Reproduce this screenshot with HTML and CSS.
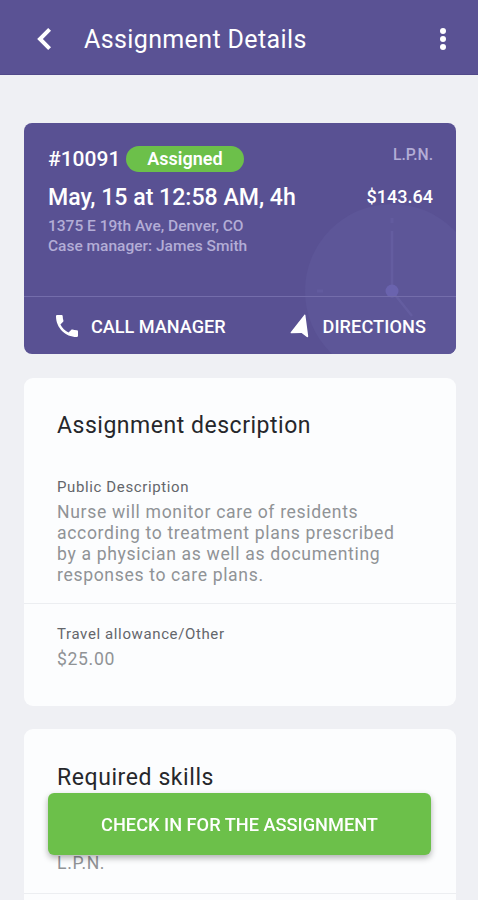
FILE: index.html
```html
<!DOCTYPE html>
<html lang="en">
<head>
  <meta charset="UTF-8" />
  <meta name="viewport" content="width=device-width, initial-scale=1.0" />
  <title>Assignment Details</title>
  <link rel="stylesheet" href="styles.css">
</head>
<body>
  <header class="topbar">
    <button class="icon-button" aria-label="Back">
      <svg width="16" height="26" viewBox="0 0 16 26"><path d="M13.6 3.4 4 13l9.6 9.6" fill="none" stroke="#fff" stroke-width="4"/></svg>
    </button>
    <h1>Assignment Details</h1>
    <button class="icon-button" aria-label="More">
      <svg width="8" height="24" viewBox="0 0 8 24" fill="#fff"><circle cx="4" cy="4" r="3"/><circle cx="4" cy="12" r="3"/><circle cx="4" cy="20" r="3"/></svg>
    </button>
  </header>

  <main>
    <section class="summary">
      <svg class="clock" width="176" height="176" viewBox="0 0 176 176">
        <circle cx="88" cy="88" r="87" fill="#5d5698"/>
        <path d="M88 88V28M88 88l20 25" stroke="#645da0" stroke-width="2.5"/>
        <circle cx="88" cy="88" r="6.5" fill="#6a63ae"/>
        <path d="M88 15v5M13 88h6" stroke="#625b9e" stroke-width="3"/>
      </svg>
      <div class="summary-info">
        <div class="row">
          <div class="number">#10091</div>
          <div class="badge">Assigned</div>
          <div class="role">L.P.N.</div>
        </div>
        <div class="row">
          <div class="date">May, 15 at 12:58 AM, 4h</div>
          <div class="price">$143.64</div>
        </div>
        <div class="address">1375 E 19th Ave, Denver, CO<br>Case manager: James Smith</div>
      </div>
      <div class="actions">
        <a class="call">
          <svg width="22" height="22" viewBox="3 3 18 18"><path fill="#fff" d="M6.62 10.79c1.44 2.83 3.76 5.14 6.59 6.59l2.2-2.2c.27-.27.67-.36 1.02-.24 1.12.37 2.33.57 3.57.57.55 0 1 .45 1 1V20c0 .55-.45 1-1 1-9.39 0-17-7.61-17-17 0-.55.45-1 1-1h3.5c.55 0 1 .45 1 1 0 1.25.2 2.45.57 3.57.11.35.03.74-.25 1.02l-2.2 2.2z"/></svg>
          Call manager
        </a>
        <a class="directions">
          <svg width="19" height="24" viewBox="0 0 19 24"><path fill="#fff" d="M14.2.9c.4-.7 1.1-.6 1.2.2l2.8 21c.1 1-.6 1.4-1.4.8L11.6 19l-10 .2c-1 0-1.3-.6-.7-1.3z"/></svg>
          Directions
        </a>
      </div>
    </section>

    <section class="card description">
      <h2>Assignment description</h2>
      <div class="field">
        <h3>Public Description</h3>
        <p>Nurse will monitor care of residents<br>according to treatment plans prescribed<br>by a physician as well as documenting<br>responses to care plans.</p>
      </div>
      <div class="field">
        <h3>Travel allowance/Other</h3>
        <p>$25.00</p>
      </div>
    </section>

    <section class="card skills">
      <h2>Required skills</h2>
      <div class="field">
        <p>L.P.N.</p>
      </div>
    </section>
  </main>

  <button class="check-in">Check in for the assignment</button>
</body>
</html>
```
FILE: styles.css
```css
* {
  box-sizing: border-box;
}
body {
  margin: 0;
  height: 100vh;
  overflow: hidden;
  font-family: Roboto, sans-serif;
  background: #eff0f4;
  color: #26272b;
}
h1, h2, h3, p {
  margin: 0;
  font-weight: 400;
}
button {
  border: none;
  font-family: inherit;
  cursor: pointer;
}
svg {
  display: block;
}
.topbar {
  display: flex;
  align-items: center;
  height: 75px;
  padding: 3px 31px 0 36px;
  background: #5a5294;
  border-bottom: 1px solid #514989;
  color: #fff;
}
.topbar h1 {
  flex: 1;
  margin: 2px 0 0 32px;
  font-size: 25px;
  line-height: 30px;
  letter-spacing: 0.38px;
}
.icon-button {
  padding: 0;
  background: none;
}
main {
  padding: 48px 22px 0 24px;
}
.summary {
  position: relative;
  display: flex;
  flex-direction: column;
  height: 231px;
  overflow: hidden;
  border-radius: 8px;
  background: #595193;
  color: #fff;
}
.clock {
  position: absolute;
  left: 280px;
  top: 80px;
}
.summary-info {
  position: relative;
  flex: 1;
  padding: 22px 23px 0 24px;
  font-weight: 500;
}
.row {
  display: flex;
  align-items: center;
}
.number {
  width: 78px;
  padding-top: 1px;
  font-size: 21px;
  line-height: 26px;
}
.badge {
  width: 118px;
  height: 26px;
  border-radius: 13px;
  background: #6cc04a;
  text-align: center;
  font-size: 18px;
  font-weight: 600;
  line-height: 26px;
}
.role {
  margin: -8px 0 0 auto;
  font-size: 15.7px;
  color: #b3add6;
}
.date {
  margin-top: 11px;
  font-size: 23.1px;
  line-height: 29px;
}
.price {
  margin: 8px 0 0 auto;
  font-size: 18px;
}
.address {
  margin-top: 5px;
  font-size: 15.5px;
  line-height: 19.5px;
  color: #b3add6;
}
.actions {
  position: relative;
  display: flex;
  justify-content: space-between;
  height: 58px;
  padding: 1px 30px 0 32px;
  border-top: 1px solid #746dab;
  font-size: 18.1px;
  font-weight: 500;
  text-transform: uppercase;
}
.actions a {
  display: flex;
  align-items: center;
}
.call {
  gap: 13px;
}
.directions {
  gap: 13px;
  letter-spacing: 0.1px;
}
.card {
  margin-top: 24px;
  border-radius: 9px;
  background: #fcfdfe;
}
.card h2 {
  padding: 33px 33px 0;
  font-size: 23px;
  line-height: 30px;
  letter-spacing: 0.52px;
}
.description {
  height: 328px;
}
.field {
  padding: 20px 33px;
}
.field + .field {
  border-top: 1px solid #eceef1;
}
.description h2 + .field {
  padding-top: 36px;
  padding-bottom: 17px;
}
.field h3 {
  font-size: 15px;
  line-height: 20px;
  letter-spacing: 0.62px;
  color: #64666b;
}
.field p {
  margin-top: 5px;
  font-size: 17.6px;
  line-height: 21px;
  letter-spacing: 0.65px;
  color: #909396;
}
.skills {
  margin-top: 23px;
  height: 171px;
  border-radius: 9px 9px 0 0;
}
.skills h2 {
  padding-top: 34px;
  letter-spacing: 0.58px;
}
.skills .field {
  padding: 55px 33px 19px;
  border-bottom: 1px solid #eceef1;
}
.check-in {
  position: fixed;
  left: 48px;
  bottom: 45px;
  width: 383px;
  height: 62px;
  padding-top: 2px;
  border-radius: 6px;
  background: #6cc04a;
  box-shadow: 0 3px 6px rgba(0, 0, 0, 0.3);
  color: #fff;
  font-size: 18.2px;
  font-weight: 500;
  text-transform: uppercase;
}
```
